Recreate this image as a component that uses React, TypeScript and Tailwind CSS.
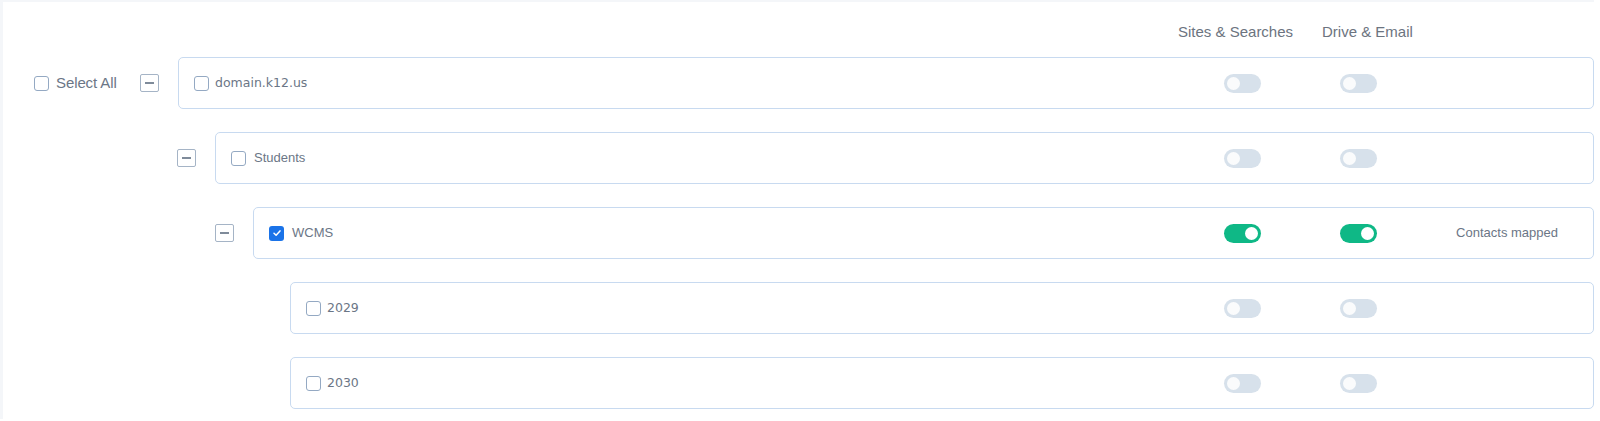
import React from "react";

const arial = { fontFamily: '"Liberation Sans", Arial, sans-serif' };
const geo = { fontFamily: '"DejaVu Sans", "Liberation Sans", sans-serif' };

function Checkbox({ checked = false }: { checked?: boolean }) {
  if (checked) {
    return (
      <span className="flex h-[15px] w-[15px] shrink-0 items-center justify-center rounded-[3px] bg-[#1a73e8]">
        <svg width="10" height="10" viewBox="0 0 10 10" fill="none">
          <path d="M2 5.2 L4.1 7.2 L8 2.9" stroke="white" strokeWidth="1.5" strokeLinecap="round" strokeLinejoin="round" />
        </svg>
      </span>
    );
  }
  return <span className="block h-[15px] w-[15px] shrink-0 rounded-[3px] border-[1.5px] border-[#94a9c3] bg-white" />;
}

function Minus({ hidden = false }: { hidden?: boolean }) {
  return (
    <span
      className={
        "flex h-[18px] w-[19px] shrink-0 items-center justify-center rounded-[2px] border border-[#a5b4c6] bg-white " +
        (hidden ? "invisible" : "")
      }
    >
      <span className="block h-[1.5px] w-[9px] bg-[#7f8b9a]" />
    </span>
  );
}

function Toggle({ on = false }: { on?: boolean }) {
  return (
    <span
      className={
        "flex h-[19px] w-[37px] shrink-0 items-center rounded-full px-[3px] " +
        (on ? "justify-end bg-[#0fb886]" : "justify-start bg-[#d7e1eb]")
      }
    >
      <span className={"block h-[13px] w-[13px] rounded-full " + (on ? "bg-white" : "bg-[#fafbfc]")} />
    </span>
  );
}

type Row = {
  label: string;
  pl: string;
  minusHidden?: boolean;
  checked?: boolean;
  on?: boolean;
  status?: string;
  font: "arial" | "geo";
};

export default function App() {
  const rows: Row[] = [
    { label: "Students", pl: "pl-[174px]", font: "arial" },
    { label: "WCMS", pl: "pl-[212px]", checked: true, on: true, status: "Contacts mapped", font: "arial" },
    { label: "2029", pl: "pl-[249px]", minusHidden: true, font: "geo" },
    { label: "2030", pl: "pl-[249px]", minusHidden: true, font: "geo" },
  ];

  const box = (label: string, font: "arial" | "geo", checked?: boolean, on?: boolean, status?: string) => (
    <div className="ml-[19px] flex h-[52px] flex-1 items-center rounded-[5px] border border-[#c8daf0] bg-white pl-[15px]">
      <Checkbox checked={checked} />
      <span
        className={
          "flex-1 text-[#6b7686] " + (font === "arial" ? "ml-[8px] text-[13px]" : "ml-[6px] text-[12.5px]")
        }
        style={font === "arial" ? arial : geo}
      >
        {label}
      </span>
      <Toggle on={on} />
      <span className="w-[79px] shrink-0" />
      <Toggle on={on} />
      <span className="flex w-[216px] shrink-0 justify-end pr-[35px] text-[13px] text-[#6b7686]" style={arial}>
        {status}
      </span>
    </div>
  );

  return (
    <div className="min-h-screen w-full bg-white">
      <div className="w-[1594px] border-l-[3px] border-t-[2px] border-[#f4f6f9] bg-white pb-[10px]">
        <div className="flex pl-[1175px] pt-[21px] text-[15px] leading-[17px] text-[#6c7480]" style={arial}>
          <span className="w-[144px]">Sites &amp; Searches</span>
          <span>Drive &amp; Email</span>
        </div>

        <div className="mt-[17px] flex flex-col gap-[23px]">
          <div className="flex items-center">
            <div className="flex w-[137px] shrink-0 items-center pl-[31px]">
              <Checkbox />
              <span className="ml-[7px] text-[15px] tracking-[-0.1px] text-[#6b7686]" style={arial}>
                Select All
              </span>
            </div>
            <Minus />
            {box("domain.k12.us", "geo")}
          </div>

          {rows.map((r) => (
            <div key={r.label} className={"flex items-center " + r.pl}>
              <Minus hidden={r.minusHidden} />
              {box(r.label, r.font, r.checked, r.on, r.status)}
            </div>
          ))}
        </div>
      </div>
    </div>
  );
}
